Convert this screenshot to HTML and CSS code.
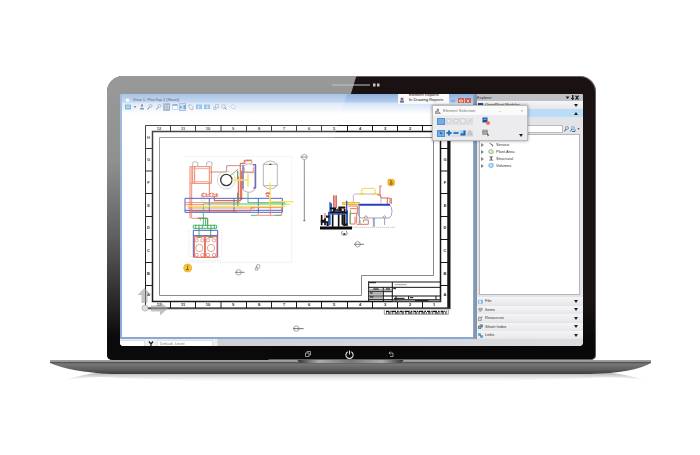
FILE: index.html
```html
<!DOCTYPE html>
<html lang="en">
<head>
<meta charset="utf-8">
<title>OpenPlant Modeler</title>
<link rel="stylesheet" href="styles.css">
</head>
<body>
<main class="stage">
<div class="lid">
  <div class="gloss"></div>
  <div class="bezel-top">
    <svg width="50" height="6" viewBox="0 0 50 6"><path d="M0 3H38" stroke="#c4c4c4" stroke-opacity=".5" stroke-width="2"/><path d="M41 1.500h2.500v3h-2.500zM45 1.500h2.500v3h-2.500z" fill="#c8c8c8"/></svg>
  </div>
  <div class="screen">
    <section class="view">
      <header class="view-title">
        <svg class="ico" viewBox="0 0 12 12"><path d="M1 2h7l3 3v6H1z" fill="#fff" stroke="#8ba6c8"/></svg>
        <span>View 1, PlanTop-1 [Sheet]</span>
      </header>
      <div class="toolbar">
        <button aria-label="View attributes"><svg class="ico" viewBox="0 0 12 12"><path d="M0 1h12v10H0z" fill="#5aa3dd"/><path d="M2 4h8M2 7h8" stroke="#fff"/></svg></button>
        <button class="slim" aria-label="More"><svg class="ico" viewBox="0 0 12 12"><path d="M2 4h8L6 9z" fill="#445"/></svg></button>
        <button aria-label="Brightness"><svg class="ico" viewBox="0 0 12 12"><path d="M6 0v7M4 3h4" stroke="#667" stroke-width="2"/><path d="M2 8h8v3H2z" fill="#589"/></svg></button>
        <button class="wide" aria-label="Update"><svg class="ico" viewBox="0 0 12 12"><path d="M1 11l4-5" stroke="#667" stroke-width="2"/><circle cx="7" cy="4" r="3" fill="#dde" stroke="#778"/></svg></button>
        <button aria-label="Zoom in"><svg class="ico" viewBox="0 0 12 12"><path d="M1 11l4-5" stroke="#667" stroke-width="2"/><circle cx="7" cy="4" r="3" fill="#def" stroke="#778"/></svg></button>
        <button class="on" aria-label="Window area"><svg class="ico" viewBox="0 0 12 12"><path d="M1 1h10v10H1zM1 6h10M6 1v10" fill="none" stroke="#788ba0" stroke-width="1.500"/></svg></button>
        <button aria-label="Fit view"><svg class="ico" viewBox="0 0 12 12"><path d="M1 1h10v10H1z" fill="#fff" stroke="#68ace0"/><path d="M1 2h10" stroke="#4798dc" stroke-width="3"/></svg></button>
        <button class="on" aria-label="Rotate view"><svg class="ico" viewBox="0 0 12 12"><path d="M0 3l5 3-5 4zM7 2h5v8H7z" fill="#4c97d6"/></svg></button>
        <button aria-label="Pan view"><svg class="ico" viewBox="0 0 12 12"><path d="M2 1l4 1 4 4v5H5L2 6z" fill="#eee" stroke="#777"/></svg></button>
        <button aria-label="View previous"><svg class="ico" viewBox="0 0 12 12"><path d="M0 1h12v9H0z" fill="#74b3e4"/><path d="M3 6h6M5 3v6" stroke="#fff"/></svg></button>
        <button class="wide" aria-label="View next"><svg class="ico" viewBox="0 0 12 12"><path d="M0 1h12v9H0z" fill="#74b3e4"/><path d="M3 6h6M7 3v6" stroke="#fff"/></svg></button>
        <button aria-label="Copy view"><svg class="ico" viewBox="0 0 12 12"><path d="M5 1h6v7H5zM1 6h5v5H1z" fill="#d6e8f7" stroke="#7894b0"/></svg></button>
        <button class="wide" aria-label="Clip volume"><svg class="ico" viewBox="0 0 12 12"><circle cx="5" cy="5" r="4" fill="#d6e8f7" stroke="#7894b0"/><path d="M7 7l4 4" stroke="#667" stroke-width="2"/></svg></button>
        <button aria-label="Clip mask"><svg class="ico" viewBox="0 0 12 12"><path d="M1 5l5-4 5 4-5 5zM8 8l3 3" fill="#eef4fa" stroke="#8aa0b8"/></svg></button>
      </div>
      <svg class="sheet" viewBox="122 113 351 224" role="img" aria-label="Plant drawing sheet">
        <g fill="none" stroke="#161616">
          <path d="M145.500 125.500H448V308H145.500z"/>
          <path d="M449 126V309" stroke-width="3"/><path d="M146 308.500H450" stroke="#444" stroke-width="1.500"/>
          <path d="M152.500 131.500H440.500V301.500H152.500z" stroke-width="1.500"/>
          <path d="M170.500 125v6M195.500 125v6M221 125v6M246.500 125v6M271.500 125v6M296.500 125v6M321.500 125v6M347.500 125v6M372.500 125v6M397.500 125v6M422.500 125v6M170.500 302v6M195.500 302v6M221 302v6M246.500 302v6M271.500 302v6M296.500 302v6M321.500 302v6M347.500 302v6M372.500 302v6M397.500 302v6M422.500 302v6"/>
          <path d="M145 148.500h7M145 171h7M145 193.500h7M145 216.500h7M145 239.500h7M145 262.500h7M145 285.500h7M441 148.500h7M441 171h7M441 193.500h7M441 216.500h7M441 239.500h7M441 262.500h7M441 285.500h7"/>
          <path d="M159.500 137.500H433.500V275.500H361.500V295.500H159.500z" stroke="#888"/>
        </g>
        <g class="grid-label">
          <text x="159" y="129.500">12</text><text x="183" y="129.500">11</text><text x="208" y="129.500">10</text><text x="233" y="129.500">9</text><text x="259" y="129.500">8</text><text x="284" y="129.500">7</text><text x="309" y="129.500">6</text><text x="334" y="129.500">5</text><text x="360" y="129.500">4</text><text x="385" y="129.500">3</text><text x="410" y="129.500">2</text>
          <text x="159" y="306">12</text><text x="183" y="306">11</text><text x="208" y="306">10</text><text x="233" y="306">9</text><text x="259" y="306">8</text><text x="284" y="306">7</text><text x="309" y="306">6</text><text x="334" y="306">5</text><text x="360" y="306">4</text><text x="385" y="306">3</text><text x="410" y="306">2</text><text x="434" y="306">1</text>
          <text x="148.500" y="139">H</text><text x="148.500" y="161">G</text><text x="148.500" y="184">F</text><text x="148.500" y="207">E</text><text x="148.500" y="229">D</text><text x="148.500" y="252">C</text><text x="148.500" y="275">B</text><text x="148.500" y="296">A</text>
          <text x="445" y="161">G</text><text x="445" y="184">F</text><text x="445" y="207">E</text><text x="445" y="229">D</text><text x="445" y="252">C</text><text x="445" y="275">B</text><text x="445" y="296">A</text>
        </g>
        <!-- plan view -->
        <g transform="translate(175 150) scale(.3333)" fill="none" stroke-width="2.500">
          <path d="M28 20H350V337H28" stroke="#ccc" stroke-width="1.500" stroke-dasharray="3 3"/>
          <path d="M53 48V38q7-7 15 0V48M95 48V38q8-7 16 0V48" stroke="#a99"/>
          <path d="M45 205V50H109V100H45M53 50V100M103 50V100M59 50v50M50 100V183H188M103 100V132" stroke="#e8755a" stroke-width="3"/>
          <path d="M49 50v130M48 95h60M48 56h60" stroke="#f0a088" stroke-width="3"/>
          <path d="M105 66H155V47H200M165 78L190 57" stroke="#b8604e"/>
          <circle cx="154" cy="90" r="27" stroke="#bbb" stroke-width="2"/><circle cx="154" cy="90" r="17" stroke="#222" stroke-width="4"/>
          <path d="M188 62V88M188 128V168" stroke="#2fa457" stroke-width="4"/>
          <path d="M196 40V152H118V138M190 80V156M200 62V150M196 40H208V32H230" stroke="#e05a3c" stroke-width="3.500"/>
          <path d="M80 132q8-6 12 0t12 0 12 0 12 0V139H80zM84 129v12M94 129v12M104 129v12M114 129v12M124 129v12" stroke="#e06c54"/>
          <circle cx="84" cy="148" r="6" stroke="#ddd"/>
          <path d="M204 50q18-18 35 0V120q-17 14-35 0z" stroke="#c98c83"/><path d="M210 42V30H230V42M204 68H239M208 52V66H235V52" stroke="#ce7b69"/>
          <path d="M204 44V116M242 44V114M234 44h9M234 114h9" stroke="#3c51c2" stroke-width="3.500"/>
          <path d="M170 90H220M219 72V110" stroke="#f2df39" stroke-width="4"/>
          <path d="M265 43q20-20 42 0V107q-20 20-42 0zM265 43H307M265 107H307" stroke="#9b9b9b"/><path d="M283 43h6" stroke="#222" stroke-width="4"/>
          <path d="M30 145H322V187H30zM103 145V187M177 145V187M250 145V187M30 181H322" stroke="#4354c4" stroke-width="3"/>
          <path d="M30 158H195M38 174H240M45 183H228V173H320V196H250V186M286 145V196M30 164H85" stroke="#e96a4b" stroke-width="2.500"/>
          <path d="M85 228V162H335M219 128V158H330M228 196H248M300 196H318M188 145V170" stroke="#42b66a" stroke-width="3"/>
          <path d="M36 169H330M285 98V165M285 155H355M330 163H345" stroke="#f5e33b" stroke-width="4"/>
          <path d="M272 132q8-6 12 0M274 138h8" stroke="#e4533c" stroke-width="5"/>
          <path d="M50 180V205H98V228M70 205V204H92M76 205V212" stroke="#e8755a"/><path d="M68 205H98V228M92 205V228" stroke="#2fa457" stroke-width="3"/>
          <path d="M42 242V320H140V242M42 332H140" stroke="#ccc" stroke-dasharray="4 3" stroke-width="1.500"/>
          <path d="M55 226H125V235H55zM62 224v12M72 224v12M82 224v12M98 224v12M108 224v12M118 224v12M72 235V262M107 235V262M65 262H80M100 262H115" stroke="#35ac5d" stroke-width="3"/>
          <path d="M55 322V241H128V322M55 257H128" stroke="#4652b9" stroke-width="3"/>
          <path d="M58 260H126V322H58zM90 260V322" stroke="#e2533b" stroke-width="3"/><path d="M90 262V320" stroke="#e2533b" stroke-width="4"/>
          <g stroke="#d8695a" stroke-width="2"><circle cx="73" cy="294" r="11"/><circle cx="108" cy="294" r="11"/><circle cx="65" cy="271" r="5"/><circle cx="82" cy="271" r="5"/><circle cx="99" cy="271" r="5"/><circle cx="117" cy="271" r="5"/><circle cx="65" cy="315" r="5"/><circle cx="82" cy="315" r="5"/><circle cx="99" cy="315" r="5"/><circle cx="117" cy="315" r="5"/></g>
          <circle cx="38" cy="354" r="12" fill="#f7c62f" stroke="#eaa920"/><path d="M38 346v10l-5 3h9" stroke="#63480f"/>
          <circle cx="191" cy="367" r="8" stroke="#777" stroke-width="2"/><path d="M180 367H209" stroke="#666"/>
          <path d="M240 360l6-16q10-2 9 6t-9 7M240 360h10" stroke="#999"/><path d="M246 350v5" stroke="#555" stroke-width="3"/>
          <circle cx="388" cy="21" r="8" stroke="#777" stroke-width="2"/><path d="M376 21H398M388 30V212" stroke="#666"/><path d="M385 212h6" stroke="#555" stroke-width="3"/>
        </g>
        <!-- elevation view -->
        <g transform="translate(310 170) scale(.3333)" fill="none" stroke-width="2.500">
          <path d="M130 100V76q2-4 8-4H205q8 2 8 12V100" stroke="#b3a5a5"/>
          <path d="M155 70V60q2-5 8-5H190q6 2 6 14M150 72H165M186 72H200" stroke="#f0dc3c" stroke-width="4" stroke-dasharray="5 1"/>
          <path d="M210 50V75L215 84H240V100M202 75H212M232 84V102M244 84V102M209 50v-2h6" stroke="#df6652" stroke-width="3"/>
          <path d="M152 104H238q8 6 8 20t-8 20H152q-8-6-8-20t8-20z" stroke="#8f93aa"/>
          <path d="M145 104H240" stroke="#293fc0" stroke-width="6"/>
          <path d="M163 144q5-14 10 0M218 144q5-14 10 0M190 144V170M193 144V170M224 144V165M148 104V160" stroke="#8288b5"/>
          <path d="M125 172H256" stroke="#bbb" stroke-dasharray="4 2"/>
          <path d="M98 104V98H150M100 103H144" stroke="#f2b829" stroke-width="4"/>
          <path d="M115 108H142V130H120V162H135V140M140 130V160M160 150H175V163H140M120 116H140M150 150V163" stroke="#e1725b" stroke-width="3"/>
          <path d="M121 120V162M160 150V158" stroke="#47b264"/>
          <path d="M75 76V115M71 76V115M79 76V115M45 130V155M82 116H105" stroke="#d14e42" stroke-width="3"/>
          <path d="M60 96V165M64 100V125H100M110 92V165M112 120V168M56 125V168" stroke="#315bb5" stroke-width="4"/>
          <path d="M30 174H126" stroke="#080808" stroke-width="9"/>
          <path d="M35 135V166M32 156H52V168M45 145V166M60 128H112M68 125V170M86 128V170M104 116V168M60 115H78M85 112H106M72 120H96M32 152H45" stroke="#111" stroke-width="5"/>
          <path d="M72 116V125M90 112V124M98 122V164M48 140H58M98 164H112" stroke="#181818" stroke-width="7"/><path d="M64 132H105" stroke="#3156b4" stroke-width="5"/>
          <path d="M97 183q-5 10 0 12h12q5-2 0-12" stroke="#777"/><path d="M100 192h6" stroke="#111" stroke-width="5"/>
          <path d="M234 28H250l3 4V45q-10 6-19 0z" fill="#f5b82c" stroke="#edac31"/><path d="M240 31l6 3-5 4v5h5v-6" stroke="#785017"/>
          <circle cx="143" cy="223" r="8" stroke="#777" stroke-width="2"/><path d="M132 223H162" stroke="#666"/>
        </g>
        <!-- title block -->
        <g transform="translate(280 260) scale(.3333)" fill="none" stroke="#111" stroke-width="3">
          <path d="M266 66H482M266 64V125M337 66V125M310 82V125M266 82H482M266 95H337M266 108H482M266 119H337M386 108V118M337 119H482M468 108V119"/>
          <path d="M268 90H335M268 101H308M268 113H308M337 122H482" stroke="#777" stroke-width="7" stroke-opacity=".6"/>
          <path d="M268 68h20M280 87h16M318 87h12M270 99h8M270 111h10M340 86h8M342 115h32M390 113h10M405 122h40M348 108v14" stroke-width="3"/>
          <path d="M345 74H380" stroke="#777" stroke-width="2"/>
          <path d="M313 150V163H505V150" stroke="#666" stroke-width="2"/>
          <path d="M318 154H500" stroke-width="4" stroke-dasharray="9 2 3 2 14 3 5 3"/><path d="M318 159H500" stroke="#444" stroke-width="4" stroke-dasharray="3 3 8 3 5 4 12 2"/>
          <circle cx="49" cy="206" r="8" stroke="#777" stroke-width="2"/><path d="M39 206H71" stroke="#555" stroke-width="2.500"/>
        </g>
        <!-- axis arrows -->
        <path d="M144.500 288l7 7h-4v8h-6v-8h-4zM151 305.500h9v-4l8 7-8 7v-4h-9z" fill="#999" fill-opacity=".6"/><circle cx="145" cy="308" r="3" fill="#ddd" stroke="#bbb"/>
      </svg>
      <div class="menu">
        <a href="#" class="cut">Element Reports</a>
        <a href="#"><svg class="ico" viewBox="0 0 12 12"><path d="M2 1h8v10H2z" fill="#bcd"/><path d="M4 2h4v5H4z" fill="#b55"/><path d="M2 8h8v3H2z" fill="#57a"/></svg>In Drawing Reports</a>
      </div>
      <div class="window-buttons">
        <button aria-label="Minimize"><svg class="ico" viewBox="0 0 12 12"><path d="M1 3h4v6H1zM7 3h4v6H7z" fill="none" stroke="#5681b9"/></svg></button>
        <button class="red" aria-label="Restore"><svg class="ico" viewBox="0 0 12 12"><path d="M2 3h8v6H2z" fill="none" stroke="#fff" stroke-width="2"/></svg></button>
        <button class="red" aria-label="Close"><svg class="ico" viewBox="0 0 12 12"><path d="M2 2l8 8M10 2l-8 8" stroke="#fff" stroke-width="2"/></svg></button>
      </div>
    </section>
    <aside class="explorer">
      <header class="ex-head"><span>Explorer</span><svg width="14" height="5" viewBox="0 0 28 10"><path d="M1 3h8L5 8zM12 6h6v2h-6zM14 0h3v10h-3z" fill="#222"/><path d="M21 1l6 8M27 1l-6 8" stroke="#222" stroke-width="2.500"/></svg></header>
      <button class="bar"><svg class="ico" viewBox="0 0 12 12"><path d="M0 0h12v12H0z" fill="#1d4f9c"/><path d="M3 6h6" stroke="#9cf" stroke-width="3"/></svg><span>OpenPlant Modeler</span><i class="caret"></i></button>
      <button class="bar active" aria-label="Collapse"><span></span><i class="caret up"></i></button>
      <div class="search"><input type="text" aria-label="Search"><svg width="16" height="6" viewBox="0 0 32 12"><g fill="none" stroke="#557"><circle cx="6" cy="4" r="3"/><path d="M1 11l3-5" stroke-width="2"/><circle cx="18" cy="4" r="3" stroke="#37b"/><path d="M13 11l3-5M16 11h6V7" stroke="#37b" stroke-width="2"/></g><path d="M27 4h4l-2 4z" fill="#555"/></svg></div>
      <ul class="tree">
        <li><i class="twist"></i><svg class="ico" viewBox="0 0 12 12"><path d="M3 2l3 4 4 1v4" fill="none" stroke="#555" stroke-width="2"/></svg>Service</li>
        <li><i class="twist"></i><svg class="ico" viewBox="0 0 12 12"><path d="M1 4l4-3 6 3v6l-5 1-5-2z" fill="#dfeed8" stroke="#6a9b5a" stroke-width="1.500"/></svg>Plant Area</li>
        <li><i class="twist"></i><svg class="ico" viewBox="0 0 12 12"><path d="M2 1h9v2H8v6h3v2H2V9h3V3H2z" fill="#555"/></svg>Structural</li>
        <li><i class="twist"></i><svg class="ico" viewBox="0 0 12 12"><path d="M1 3l4-2 6 1v7l-4 2-6-2z" fill="#bde1fb" stroke="#3d94da" stroke-width="1.500"/></svg>Volumes</li>
      </ul>
      <div class="sections">
        <button class="bar"><svg class="ico" viewBox="0 0 12 12"><path d="M0 2h12v9H0z" fill="#7dbcec"/><path d="M3 4h4v5H3z" fill="#fff"/></svg><span>File</span><i class="caret"></i></button>
        <button class="bar"><svg class="ico" viewBox="0 0 12 12"><path d="M2 3h8v4L7 10H4L2 7z" fill="#bbb" stroke="#555"/></svg><span>Items</span><i class="caret"></i></button>
        <button class="bar"><svg class="ico" viewBox="0 0 12 12"><path d="M1 3h7v8H1zM6 5l5-4" fill="#cde" stroke="#678" stroke-width="1.500"/></svg><span>Resources</span><i class="caret"></i></button>
        <button class="bar"><svg class="ico" viewBox="0 0 12 12"><path d="M1 5h6v6H1zM4 2h7v5H7" fill="#9ab" stroke="#456" stroke-width="1.500"/></svg><span>Sheet Index</span><i class="caret"></i></button>
        <button class="bar"><svg class="ico" viewBox="0 0 12 12"><path d="M1 1h5v5H1zM6 6h5v5H6zM4 4l5 5" fill="#5aa9e8" stroke="#2572b8"/></svg><span>Links</span><i class="caret"></i></button>
      </div>
    </aside>
    <footer class="status"><span class="cell first"></span><svg class="ico" viewBox="0 0 12 12"><path d="M2 1l4 5v6M10 1L6 6" fill="none" stroke="#222" stroke-width="2.500"/></svg><span class="cell">Default, Level</span></footer>
    <section class="dialog">
      <header><svg class="ico" viewBox="0 0 12 12"><path d="M1 11V7h3V2h3v5l4 4z" fill="#bbb" stroke="#555"/></svg><span>Element Selection</span><button aria-label="Collapse dialog">–</button><button aria-label="Close dialog">×</button></header>
      <div class="tools">
        <div class="set">
          <button class="fill" aria-label="Individual"></button>
          <button aria-label="Block"><svg class="ico pale" viewBox="0 0 12 12"><path d="M2 2h6l2 4-3 4H2z"/></svg></button>
          <button aria-label="Shape"><svg class="ico pale" viewBox="0 0 12 12"><path d="M1 10l3-7h7L8 10z"/></svg></button>
          <button aria-label="Circle"><svg class="ico pale" viewBox="0 0 12 12"><circle cx="6" cy="6" r="5"/></svg></button>
          <button aria-label="Line"><svg class="ico pale" viewBox="0 0 12 12"><path d="M1 11L11 1"/></svg></button>
        </div>
        <button class="big" aria-label="Handles"><svg viewBox="0 0 16 16"><path d="M1 1h10v10H1z" fill="#1a4e99"/><path d="M3 3h6v3H3z" fill="#5aa0e0"/><circle cx="12" cy="12" r="4" fill="#e9735f"/></svg></button>
      </div>
      <div class="tools">
        <div class="set">
          <button class="fill" aria-label="New"><svg class="ico" viewBox="0 0 12 12"><path d="M3 3l6 4-3 1 1 3z" fill="#153f70"/></svg></button>
          <button aria-label="Add"><svg class="ico" viewBox="0 0 12 12"><path d="M6 1v10M1 6h10" stroke="#1f77cc" stroke-width="4"/></svg></button>
          <button aria-label="Subtract"><svg class="ico" viewBox="0 0 12 12"><path d="M1 6h10" stroke="#2b80cf" stroke-width="4"/></svg></button>
          <button aria-label="Invert"><svg class="ico" viewBox="0 0 12 12"><path d="M1 1h10v10H1z" fill="#9acbf2"/><path d="M11 1v10H1V7h6V1z" fill="#1769be"/></svg></button>
          <button aria-label="Clear"><svg class="ico" viewBox="0 0 12 12"><path d="M6 1l5 9H1zM4 5l5 3" fill="#ddd" stroke="#999"/></svg></button>
        </div>
        <button class="big" aria-label="Select all"><svg viewBox="0 0 16 16"><path d="M1 2h10v9H1zM1 5h10M1 8h10M4 2v9M8 2v9" fill="#ccc" stroke="#777"/><path d="M10 8l5 5-3 0v3z" fill="#333"/></svg></button>
        <i class="caret"></i>
      </div>
    </section>
    <div class="sheen"></div>
  </div>
  <nav class="bezel-bottom">
    <button aria-label="Windows"><svg width="6" height="6" viewBox="0 0 12 12"><path d="M1 4h7v7H1zM4 4V1h7v7H8" fill="none" stroke="#bbb" stroke-width="1.500"/></svg></button>
    <button aria-label="Power"><svg width="9" height="9" viewBox="0 0 20 20"><path d="M6 4a8 8 0 1 0 8 0M10 1v9" fill="none" stroke="#ddd" stroke-width="2.500"/></svg></button>
    <button aria-label="Back"><svg width="6" height="6" viewBox="0 0 12 12"><path d="M5 1L2 4l3 3M2 4h8v7H4" fill="none" stroke="#bbb" stroke-width="1.500"/></svg></button>
  </nav>
</div>
<svg class="base" viewBox="0 0 602 28" preserveAspectRatio="none" aria-hidden="true">
  <defs>
    <linearGradient id="metal" x2="0" y2="1"><stop offset="0" stop-color="#a5a5a5"/><stop offset=".14" stop-color="#8f8f8f"/><stop offset=".18" stop-color="#555"/><stop offset=".3" stop-color="#777"/><stop offset=".7" stop-color="#5c5c5c"/><stop offset="1" stop-color="#3c3c3c"/></linearGradient>
    <linearGradient id="notch"><stop offset="0" stop-color="#333"/><stop offset=".2" stop-color="#aaa"/><stop offset=".5" stop-color="#777"/><stop offset=".8" stop-color="#aaa"/><stop offset="1" stop-color="#333"/></linearGradient>
    <linearGradient id="shade" x2="0" y2="1"><stop offset="0" stop-color="#888" stop-opacity=".8"/><stop offset=".4" stop-color="#bbb" stop-opacity=".5"/><stop offset="1" stop-color="#fff" stop-opacity="0"/></linearGradient>
  </defs>
  <path d="M16 20Q40 12 60 12H545Q570 12 596 20Q570 16 540 18Q300 28 70 18Q45 15 16 20z" fill="url(#shade)"/>
  <path d="M0 0H602V3Q585 13 540 14H62Q20 12 0 3z" fill="url(#metal)"/>
  <path d="M248 0H354Q353 3 349 3H253Q249 3 248 0z" fill="url(#notch)"/>
</svg>
</main>
</body>
</html>
```
FILE: styles.css
```css
* { box-sizing: border-box; }
body { margin: 0; background: #fff; color: #333; font: 4px/6px "Liberation Sans", Arial, sans-serif; }
button { margin: 0; padding: 0; border: 0; background: none; color: inherit; font: inherit; display: flex; align-items: center; justify-content: center; }
a { color: inherit; text-decoration: none; }
.ico { width: 6px; height: 6px; flex: none; display: block; }
.stage { padding: 76px 49px 40px 50px; }
.base { display: block; width: 100%; height: 28px; }

.lid { position: relative; margin: 0 55px 0 57px; padding: 0 13px; border-radius: 16px 16px 5px 5px; background: linear-gradient(#1a1112, #1a1213 80%, #080808 93%); box-shadow: inset 0 0 0 1px #aaa8; overflow: hidden; }
.gloss { position: absolute; inset: 0; background: linear-gradient(#999, #909090 30%, #606060 56%, #2c2c2c 78%, #0a0a0a 92%); clip-path: polygon(0 0, 51% 0, 33% 100%, 0 100%); }
.bezel-top { position: relative; height: 18px; display: flex; align-items: center; justify-content: center; }
.bezel-top svg { margin-left: 10px; }
.bezel-bottom { position: relative; height: 14px; display: flex; align-items: center; justify-content: center; gap: 34px; padding: 2px 4px 0 0; }

.screen { position: relative; display: grid; grid-template-columns: minmax(0, 1fr) 109px; background: #d5d7db; border-radius: 2px 2px 4px 4px; overflow: hidden; }
.sheen { position: absolute; inset: 0; pointer-events: none; background: linear-gradient(#ffffff40, #ffffff18 40%, #ffffff00); clip-path: polygon(0 0, 49% 0, 33% 100%, 0 100%); }

.view { position: relative; border: solid #86a9d6; border-width: 0 1px 2px 2px; background: linear-gradient(#8eb0dd, #b3cdee 8px, #d5e3f5 9px, #fff 20px); }
.view-title { height: 9px; display: flex; align-items: center; gap: 3px; padding: 3px 0 0 3px; color: #1d3048; }
.view-title .ico { width: 5px; }
.toolbar { height: 10px; display: flex; align-items: center; gap: 1px; padding: 0 0 2px 2px; }
.toolbar button { width: 7px; height: 8px; }
.toolbar .slim { width: 5px; }
.toolbar .slim .ico { width: 4px; height: 4px; }
.toolbar .wide { width: 8px; }
.toolbar .on { background: #c6dcf4; box-shadow: inset 0 0 0 1px #9ab0ca; }
.sheet { display: block; width: 100%; height: auto; background: #fff; }
.grid-label { font: bold 4px "Liberation Sans", Arial, sans-serif; fill: #222; text-anchor: middle; }
.menu { position: absolute; top: 0; right: 24px; width: 51px; height: 10px; background: #fafafa; overflow: hidden; color: #111; }
.menu a { height: 7px; display: flex; align-items: center; gap: 4px; padding-left: 1px; white-space: nowrap; }
.menu .cut { height: 3px; margin-top: -1px; padding-left: 11px; line-height: 2px; }
.window-buttons { position: absolute; top: 4px; right: 2px; display: flex; gap: 1px; }
.window-buttons button { width: 6px; height: 5px; }
.window-buttons button:first-child { width: 8px; }
.window-buttons .ico { height: 4px; }
.window-buttons .red { background: #d75a48; }

.explorer { display: flex; flex-direction: column; border-left: 3px solid #8896aa; background: #e3e4e8; }
.ex-head { height: 7px; display: flex; align-items: center; justify-content: space-between; padding-right: 4px; background: #bfc1c5; }
.bar { width: 100%; height: 8px; flex: none; gap: 2px; padding: 0 5px 0 1px; background: linear-gradient(#f5f5f6, #e7e7ea); text-align: left; }
.bar .ico { width: 5px; height: 5px; }
.bar span { flex: 1; }
.bar.active { background: #b9dcf7; }
.caret { border: solid transparent; border-width: 3px 2px 0; border-top-color: #222; }
.caret.up { border-width: 0 2px 3px; border-bottom-color: #222; }
.search { display: flex; align-items: center; gap: 1px; margin: 8px 3px 1px 3px; }
.search input { flex: 1; min-width: 0; height: 8px; padding: 0 2px; border: 1px solid #b8babd; background: #fff; font: inherit; }
.tree { flex: 1; margin: 0 3px 2px 2px; padding: 6px 0 0 1px; list-style: none; border: 1px solid #b4b6ba; background: #fff; }
.tree li { height: 7px; display: flex; align-items: center; gap: 2px; }
.tree .ico { height: 5px; }
.twist { margin-right: 2px; border: solid transparent; border-width: 2px 0 2px 3px; border-left-color: #888; }
.sections { height: 42px; flex: none; display: flex; flex-direction: column; justify-content: space-between; }

.status { grid-column: 1 / -1; height: 7px; display: flex; gap: 4px; padding-top: 2px; background: linear-gradient(90deg, #eee, #eee 97px, #cfd1d6 98px, #dcdde0); overflow: hidden; }
.cell { width: 54px; height: 6px; padding-left: 2px; background: #fff; box-shadow: 0 0 0 1px #ddd; color: #777; }
.cell.first { width: 24px; }

.dialog { position: absolute; top: 11px; right: 55px; width: 96px; height: 36px; background: #ececee; border: 1px solid #bbb; box-shadow: 0 0 3px #0006; }
.dialog header { height: 9px; display: flex; align-items: center; gap: 2px; padding: 0 4px 0 2px; background: #fafafa; color: #777; }
.dialog header span { flex: 1; }
.dialog header button { width: 20px; justify-content: flex-end; }
.tools { height: 12px; display: flex; align-items: center; gap: 9px; padding: 0 4px; }
.set { display: flex; background: #dfe0e3; }
.set button { width: 7px; height: 7px; }
.set .fill { width: 8px; background: #72aee8; box-shadow: inset 0 0 0 1px #5590cd; }
.big, .big svg { width: 8px; height: 8px; }
.tools .caret { margin-left: auto; margin-top: 4px; }
.pale { fill: #eee; stroke: #b5b5b5; }
```
